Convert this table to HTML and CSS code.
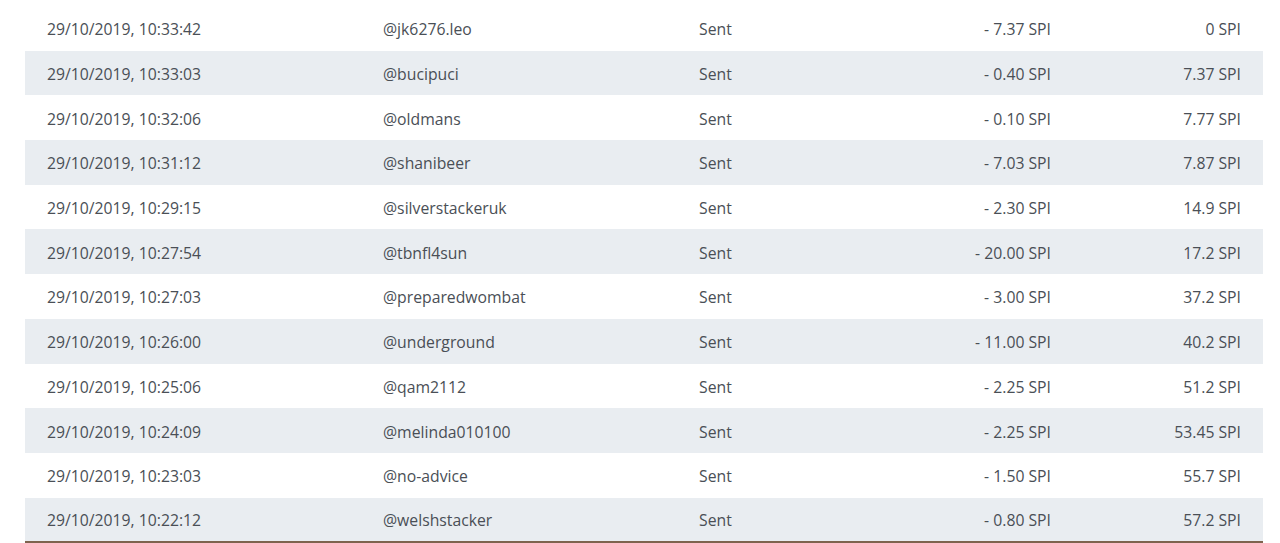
FILE: index.html
```html
<!DOCTYPE html>
<html>
<head>
<meta charset="utf-8">
<link rel="stylesheet" href="styles.css">
</head>
<body>
<div class="wrap">
<table class="tx">
<colgroup>
<col class="c-date"><col class="c-user"><col class="c-type"><col class="c-amt"><col class="c-bal">
</colgroup>
<tbody>
<tr><td>29/10/2019, 10:33:42</td><td>@jk6276.leo</td><td>Sent</td><td class="num">- 7.37 SPI</td><td class="num">0 SPI</td></tr>
<tr><td>29/10/2019, 10:33:03</td><td>@bucipuci</td><td>Sent</td><td class="num">- 0.40 SPI</td><td class="num">7.37 SPI</td></tr>
<tr><td>29/10/2019, 10:32:06</td><td>@oldmans</td><td>Sent</td><td class="num">- 0.10 SPI</td><td class="num">7.77 SPI</td></tr>
<tr><td>29/10/2019, 10:31:12</td><td>@shanibeer</td><td>Sent</td><td class="num">- 7.03 SPI</td><td class="num">7.87 SPI</td></tr>
<tr><td>29/10/2019, 10:29:15</td><td>@silverstackeruk</td><td>Sent</td><td class="num">- 2.30 SPI</td><td class="num">14.9 SPI</td></tr>
<tr><td>29/10/2019, 10:27:54</td><td>@tbnfl4sun</td><td>Sent</td><td class="num">- 20.00 SPI</td><td class="num">17.2 SPI</td></tr>
<tr><td>29/10/2019, 10:27:03</td><td>@preparedwombat</td><td>Sent</td><td class="num">- 3.00 SPI</td><td class="num">37.2 SPI</td></tr>
<tr><td>29/10/2019, 10:26:00</td><td>@underground</td><td>Sent</td><td class="num">- 11.00 SPI</td><td class="num">40.2 SPI</td></tr>
<tr><td>29/10/2019, 10:25:06</td><td>@qam2112</td><td>Sent</td><td class="num">- 2.25 SPI</td><td class="num">51.2 SPI</td></tr>
<tr><td>29/10/2019, 10:24:09</td><td>@melinda010100</td><td>Sent</td><td class="num">- 2.25 SPI</td><td class="num">53.45 SPI</td></tr>
<tr><td>29/10/2019, 10:23:03</td><td>@no-advice</td><td>Sent</td><td class="num">- 1.50 SPI</td><td class="num">55.7 SPI</td></tr>
<tr class="last"><td>29/10/2019, 10:22:12</td><td>@welshstacker</td><td>Sent</td><td class="num">- 0.80 SPI</td><td class="num">57.2 SPI</td></tr>
</tbody>
</table>
</div>
</body>
</html>
```
FILE: styles.css
```css
html, body {
  margin: 0;
  padding: 0;
  background: #ffffff;
}
.wrap {
  padding: 6px 17px 0 25px;
}
.tx {
  width: 1238px;
  border-collapse: collapse;
  table-layout: fixed;
  font-family: "Open Sans", "Liberation Sans", sans-serif;
  font-size: 15.75px;
  color: #4a4f56;
}
.c-date { width: 336px; }
.c-user { width: 316px; }
.c-type { width: 223px; }
.c-amt { width: 173px; }
.c-bal { width: 190px; }
.tx tr {
  height: 44.7px;
}
.tx tr:nth-child(even) {
  background: #e9edf1;
}
.tx td {
  padding: 2px 22px 0;
  vertical-align: middle;
  white-space: nowrap;
  line-height: 22px;
}
.tx td.num {
  text-align: right;
}
.tx tr.last {
  border-bottom: 2px solid #7e634e;
}
```
